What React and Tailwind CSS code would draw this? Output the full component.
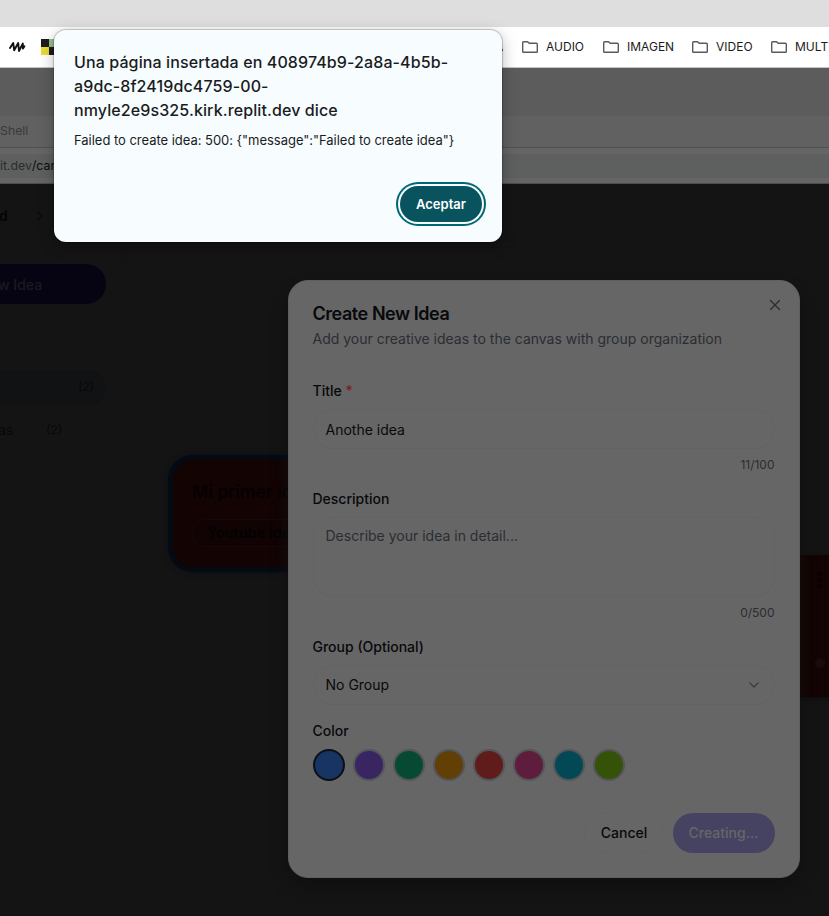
import React from 'react';
import { X, ChevronDown, ChevronRight } from 'lucide-react';

const SWATCHES = [
  'bg-[#183462] border-[#0c1016]',
  'bg-[#382562] border-[#54555a]',
  'bg-[#064a34] border-[#54555a]',
  'bg-[#623f04] border-[#54555a]',
  'bg-[#601b1b] border-[#54555a]',
  'bg-[#5e1d3d] border-[#54555a]',
  'bg-[#024955] border-[#54555a]',
  'bg-[#355209] border-[#54555a]',
];

function Folder() {
  return (
    <svg width="16" height="12" viewBox="0 0 16 12" fill="none" stroke="#5a5a5a" strokeWidth="1.4" strokeLinejoin="round" className="shrink-0">
      <path d="M0.7 1.5 Q0.7 0.7 1.5 0.7 H5.6 L7.2 2.2 H14.4 Q15.3 2.2 15.3 3 V10.5 Q15.3 11.3 14.5 11.3 H1.5 Q0.7 11.3 0.7 10.5 Z" />
    </svg>
  );
}

function Bookmark({ label, className }) {
  return (
    <div className={`flex shrink-0 items-center gap-2 ${className}`}>
      <Folder />
      <span className="text-[12px] leading-4 text-[#1b1b1b]">{label}</span>
    </div>
  );
}

function BrowserChrome() {
  return (
    <header className="shrink-0">
      <div className="h-[27px] bg-[#dedede]" />
      <div className="flex h-[41px] items-center overflow-hidden border-b border-[#c4c4c4] bg-white">
        <svg width="17" height="12" viewBox="0 0 17 12" fill="none" stroke="#111" strokeWidth="1.9" strokeLinejoin="round" strokeLinecap="round" className="ml-[9px] shrink-0">
          <path d="M1 7 L4.2 2 L5.2 9.3 L9.2 2 L10 10 L13.8 2.6 L14 7.6 L15.4 5.2" />
        </svg>
        <svg width="16" height="16" viewBox="0 0 16 16" className="ml-[15px] shrink-0">
          <path fill="#1c1c1c" d="M0 0h8v8H0zM8 8h8v8H8z" />
          <path fill="#e8dc33" d="M0 8h8v8H0z" />
          <path fill="#96be8c" d="M8 0h8v8H8z" />
        </svg>
        <span className="ml-[438px] w-[9px] shrink-0 text-[12px] leading-4 text-[#1b1b1b]">A</span>
        <div className="ml-[18px] flex">
          <Bookmark label="AUDIO" className="w-[81px]" />
          <Bookmark label="IMAGEN" className="w-[89px]" />
          <Bookmark label="VIDEO" className="w-[79px]" />
          <Bookmark label="MULTI" className="w-[120px]" />
        </div>
      </div>
      <div className="h-12 bg-[#5c5c5c]" />
      <div className="flex h-8 items-center border-b border-[#505050] bg-[#616161] text-[12.3px] text-[#3a3a3a]">Shell</div>
      <div className="h-9 border-b border-[#4c4c4c] bg-[#656565] pt-[6px]">
        <div className="flex h-6 items-center bg-[#5d605f] text-[12.3px] text-[#2a2c2c]">
          it.dev<span className="text-[#0c0c0c]">/canvas</span>
        </div>
      </div>
    </header>
  );
}

function Sidebar() {
  return (
    <aside className="h-full w-[123px] border-r border-[#121212]">
      <div className="h-[73px] border-b border-[#121212] pt-4">
        <div className="flex h-10 w-[106px] items-center rounded-r-[20px] bg-[#060412] text-[14px] font-medium text-[#1a1a20]"><span className="-ml-[2px]">w Idea</span></div>
      </div>
      <div className="pt-[49px]">
        <div className="flex h-[35px] w-[106px] items-center justify-end rounded-r-[18px] bg-[#101214] pb-[2px] pr-3 text-[12px] text-[#07080a]">(2)</div>
        <div className="mt-[7px] flex h-[35px] items-center text-[14px] text-[#07080a]">
          <span className="w-[46px]"><span className="-ml-[2px]">as</span></span>
          <span className="text-[12px]">(2)</span>
        </div>
      </div>
    </aside>
  );
}

function Canvas() {
  return (
    <main className="relative flex-1">
      <section className="absolute left-[50px] top-[212px] h-[107px] w-[300px] rounded-[20px] bg-[#130303] pl-[19px] pt-[20px] shadow-[0_0_0_5px_#040912,0_0_5px_6px_#0c1016]">
        <h2 className="whitespace-nowrap text-[17.5px] font-semibold leading-6 text-[#050102]">Mi primer idea</h2>
        <div className="mt-[15px] flex h-7 w-[180px] items-center rounded-full border border-[#180808] bg-[#110303] pl-[14px] text-[14.5px] font-semibold text-[#020202]">Youtube ideas</div>
      </section>
      <section className="absolute left-[600px] top-[307px] flex h-[142px] w-[110px] flex-col items-end bg-[#130303] shadow-[0_2px_5px_#0e0e0e]">
        <div className="mr-[11px] mt-[17px] flex flex-col gap-[2px]">
          <i className="block size-[4px] rounded-full bg-[#040202]" />
          <i className="block size-[4px] rounded-full bg-[#040202]" />
          <i className="block size-[4px] rounded-full bg-[#040202]" />
        </div>
      </section>
      <i className="absolute left-[692px] top-[410px] size-[10px] rounded-full bg-[#1a0b0a]" />
    </main>
  );
}

function IdeaDialog() {
  return (
    <div className="absolute left-[288px] top-[280px] flex h-[598px] w-[512px] flex-col rounded-[20px] border border-[#5e5f60] bg-[#666666] pl-[23.5px] pr-[24.5px] text-[14px] text-[#08090b] shadow-[0_10px_15px_#101010]">
      <X size={18} strokeWidth={1.7} className="absolute right-[15px] top-[15px] text-[#2c2d2e]" />
      <h1 className="mt-6 text-[18px] font-semibold leading-[18px] tracking-[-0.45px]">Create New Idea</h1>
      <p className="mt-[6px] leading-5 text-[#2b2d33]">Add your creative ideas to the canvas with group organization</p>
      <label className="mt-8 font-medium leading-5">Title <span className="text-[#7a2024]">*</span></label>
      <div className="mt-2 flex h-10 shrink-0 items-center rounded-[20px] border border-[#636364] px-3">Anothe idea</div>
      <p className="mt-2 text-right text-[12px] leading-4 text-[#2b2d33]">11/100</p>
      <label className="mt-4 font-medium leading-5">Description</label>
      <div className="mt-2 h-20 shrink-0 rounded-[20px] border border-[#636364] px-3 pt-2 leading-5 text-[#2b2d33]">Describe your idea in detail...</div>
      <p className="mt-2 text-right text-[12px] leading-4 text-[#2b2d33]">0/500</p>
      <label className="mt-4 font-medium leading-5">Group (Optional)</label>
      <div className="mt-2 flex h-10 shrink-0 items-center justify-between rounded-[20px] border border-[#636364] px-3 pb-px">
        No Group
        <ChevronDown size={16} strokeWidth={2} className="text-[#3b3c3d]" />
      </div>
      <label className="mt-4 font-medium leading-5">Color</label>
      <div className="mt-2 flex gap-2">
        {SWATCHES.map((tone) => (
          <span key={tone} className={`size-8 rounded-full border-2 ${tone}`} />
        ))}
      </div>
      <div className="mt-8 flex justify-end gap-2">
        <button className="h-10 w-[81px] rounded-[20px] border border-[#646465] pb-px font-medium">Cancel</button>
        <button className="h-10 w-[102px] rounded-[20px] bg-[#464362] pb-px font-medium text-[#666666]">Creating...</button>
      </div>
    </div>
  );
}

function AlertDialog() {
  return (
    <div className="absolute left-[54px] top-[30px] flex h-[212px] w-[448px] flex-col rounded-[12px] bg-[#f7fcff] px-5 pt-5 text-[#191c1d] shadow-[0_0_1px_1px_rgba(0,0,0,0.2),0_4px_16px_rgba(0,0,0,0.28)]">
      <h2 className="whitespace-nowrap text-[16px] font-medium leading-6 tracking-[0.11px]">
        Una página insertada en 408974b9-2a8a-4b5b-<br />a9dc-8f2419dc4759-00-<br />nmyle2e9s325.kirk.replit.dev dice
      </h2>
      <p className="mt-2 whitespace-nowrap text-[13px] leading-5 tracking-[-0.03px]">{'Failed to create idea: 500: {"message":"Failed to create idea"}'}</p>
      <button className="mt-[36px] h-9 w-[82px] self-end rounded-full bg-[#08535e] pt-px text-[13px] font-semibold text-white ring-2 ring-[#006875] ring-offset-2 ring-offset-[#f7fcff]">Aceptar</button>
    </div>
  );
}

export default function App() {
  return (
    <div className="relative flex h-[916px] w-[829px] flex-col overflow-hidden bg-[#141414] font-[Inter,'Liberation_Sans',sans-serif]">
      <BrowserChrome />
      <div className="flex h-16 shrink-0 items-center border-b border-[#121212] text-[14px] font-medium text-[#030303]">
        <span className="w-[32px]"><span className="-ml-px">d</span></span>
        <ChevronRight size={16} className="text-[#0b0c0d]" />
      </div>
      <div className="flex flex-1">
        <Sidebar />
        <Canvas />
      </div>
      <IdeaDialog />
      <AlertDialog />
    </div>
  );
}
